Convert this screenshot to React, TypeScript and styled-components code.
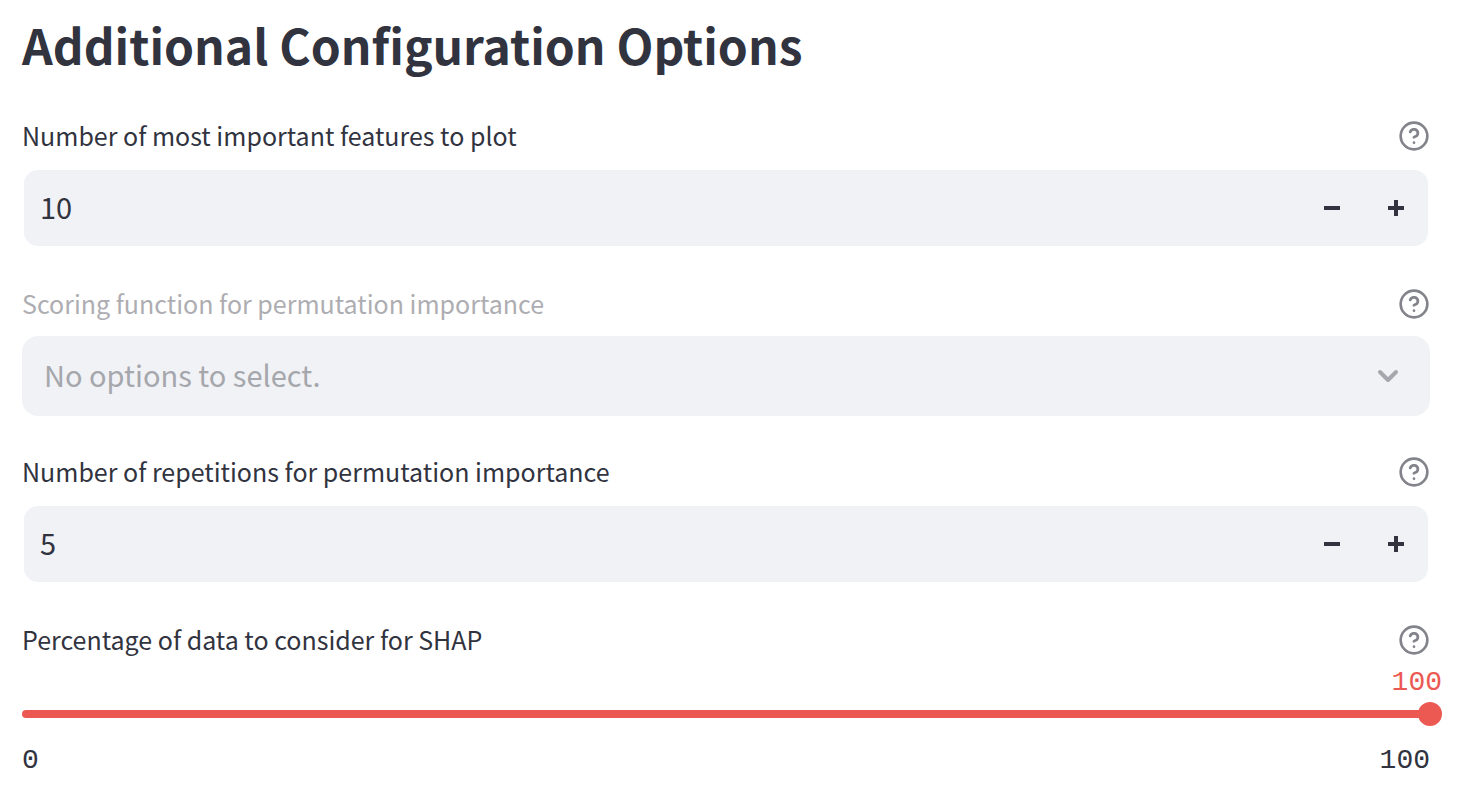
import { useState } from "react";
import type { ReactNode } from "react";
import styled, { createGlobalStyle } from "styled-components";

const ink = "#31333f";
const fieldBg = "#f0f2f6";
const red = "#ec5953";

const GlobalStyle = createGlobalStyle`
  * { box-sizing: border-box; }
  body {
    margin: 0;
    background: #ffffff;
    color: ${ink};
    font-family: "Noto Sans CJK SC", "Noto Sans", sans-serif;
  }
  button, input, select { font: inherit; color: inherit; }
`;

const Page = styled.main`
  display: flex;
  flex-direction: column;
  gap: 32px;
  padding: 4px 34px 24px 22px;
`;

const Title = styled.h1`
  margin: 0 0 -4px;
  font-size: 48px;
  font-weight: 700;
  line-height: 80px;
`;

const Field = styled.div`
  display: flex;
  flex-direction: column;
`;

const LabelRow = styled.div`
  display: flex;
  align-items: center;
  justify-content: space-between;
  height: 48px;
`;

const Label = styled.label<{ $muted?: boolean }>`
  padding-bottom: 2px;
  font-size: 25px;
  line-height: 46px;
  color: ${(p) => (p.$muted ? "#adadb2" : ink)};
`;

const HelpButton = styled.button`
  display: flex;
  padding: 0;
  border: 0;
  background: none;
  color: #83848b;
  cursor: pointer;
`;

const NumberBox = styled.div`
  display: flex;
  height: 80px;
  margin-top: 8px;
  border: 2px solid #ffffff;
  border-radius: 16px;
  background: ${fieldBg};
  overflow: hidden;
`;

const NumberInput = styled.input`
  flex: 1;
  min-width: 0;
  padding: 0 16px 4px;
  border: 0;
  outline: 0;
  background: none;
  font-size: 29px;
  appearance: textfield;
  &::-webkit-inner-spin-button,
  &::-webkit-outer-spin-button {
    appearance: none;
    margin: 0;
  }
`;

const StepButton = styled.button`
  display: flex;
  align-items: center;
  justify-content: center;
  width: 64px;
  padding: 0;
  border: 0;
  background: none;
  cursor: pointer;
`;

const SelectBox = styled.div`
  display: grid;
  align-items: center;
  height: 80px;
  margin-top: 8px;
  border-radius: 16px;
  background: ${fieldBg};
  color: #a6a7ac;
  > * { grid-area: 1 / 1; }
  > svg {
    justify-self: end;
    margin-right: 26px;
    pointer-events: none;
  }
`;

const Select = styled.select`
  width: 100%;
  height: 80px;
  padding: 0 64px 4px 22px;
  border: 0;
  background: none;
  font-size: 29px;
  appearance: none;
  &:disabled {
    color: inherit;
    opacity: 1;
    cursor: not-allowed;
  }
`;

const SliderValue = styled.output`
  align-self: flex-end;
  margin-right: -12px;
  color: ${red};
  font-family: "Liberation Mono", monospace;
  font-size: 28px;
  line-height: 38px;
`;

const SliderBody = styled.div`
  display: grid;
  align-items: center;
  height: 24px;
  > * { grid-area: 1 / 1; }
`;

const Rail = styled.div`
  height: 8px;
  border-radius: 4px;
  background: #d5d6dc;
  overflow: hidden;
`;

const RailFill = styled.div`
  height: 100%;
  background: ${red};
`;

const Range = styled.input`
  width: calc(100% + 24px);
  height: 24px;
  margin: 0 -12px;
  background: none;
  appearance: none;
  cursor: pointer;
  &::-webkit-slider-thumb {
    appearance: none;
    width: 24px;
    height: 24px;
    border: 0;
    border-radius: 50%;
    background: ${red};
  }
`;

const RangeEnds = styled.div`
  display: flex;
  justify-content: space-between;
  margin-top: 16px;
  font-family: "Liberation Mono", monospace;
  font-size: 28px;
  line-height: 38px;
`;

function HelpIcon() {
  return (
    <svg width="32" height="32" viewBox="0 0 24 24" fill="none" stroke="currentColor" strokeWidth="2" strokeLinecap="round" strokeLinejoin="round" aria-hidden="true">
      <circle cx="12" cy="12" r="10" />
      <path d="M9.09 9a3 3 0 0 1 5.83 1c0 2-3 3-3 3" />
      <path d="M12 17h.01" />
    </svg>
  );
}

function FieldHeader({ id, muted, children }: { id: string; muted?: boolean; children: ReactNode }) {
  return (
    <LabelRow>
      <Label htmlFor={id} $muted={muted}>{children}</Label>
      <HelpButton type="button" aria-label="Help"><HelpIcon /></HelpButton>
    </LabelRow>
  );
}

function NumberField({ id, label, initial }: { id: string; label: string; initial: number }) {
  const [value, setValue] = useState(initial);
  return (
    <Field>
      <FieldHeader id={id}>{label}</FieldHeader>
      <NumberBox>
        <NumberInput id={id} type="number" value={value} onChange={(e) => setValue(Number(e.target.value))} />
        <StepButton type="button" aria-label="Decrease" onClick={() => setValue(value - 1)}>
          <svg width="16" height="16" viewBox="0 0 16 16" fill="currentColor" aria-hidden="true">
            <path d="M0 6h16v4H0z" />
          </svg>
        </StepButton>
        <StepButton type="button" aria-label="Increase" onClick={() => setValue(value + 1)}>
          <svg width="16" height="16" viewBox="0 0 16 16" fill="currentColor" aria-hidden="true">
            <path d="M6 0h4v6h6v4h-6v6H6v-6H0V6h6z" />
          </svg>
        </StepButton>
      </NumberBox>
    </Field>
  );
}

export default function App() {
  const [percent, setPercent] = useState(100);
  return (
    <>
      <GlobalStyle />
      <Page>
        <Title>Additional Configuration Options</Title>
        <NumberField id="features" label="Number of most important features to plot" initial={10} />
        <Field>
          <FieldHeader id="scoring" muted>Scoring function for permutation importance</FieldHeader>
          <SelectBox>
            <Select id="scoring" disabled>
              <option>No options to select.</option>
            </Select>
            <svg width="32" height="32" viewBox="0 0 32 32" fill="none" stroke="currentColor" strokeWidth="4" strokeLinecap="round" strokeLinejoin="round" aria-hidden="true">
              <path d="M8 12l8 8 8-8" />
            </svg>
          </SelectBox>
        </Field>
        <NumberField id="repetitions" label="Number of repetitions for permutation importance" initial={5} />
        <Field>
          <FieldHeader id="percentage">Percentage of data to consider for SHAP</FieldHeader>
          <SliderValue htmlFor="percentage">{percent}</SliderValue>
          <SliderBody>
            <Rail><RailFill style={{ width: `${percent}%` }} /></Rail>
            <Range id="percentage" type="range" min={0} max={100} value={percent} onChange={(e) => setPercent(Number(e.target.value))} />
          </SliderBody>
          <RangeEnds><span>0</span><span>100</span></RangeEnds>
        </Field>
      </Page>
    </>
  );
}
